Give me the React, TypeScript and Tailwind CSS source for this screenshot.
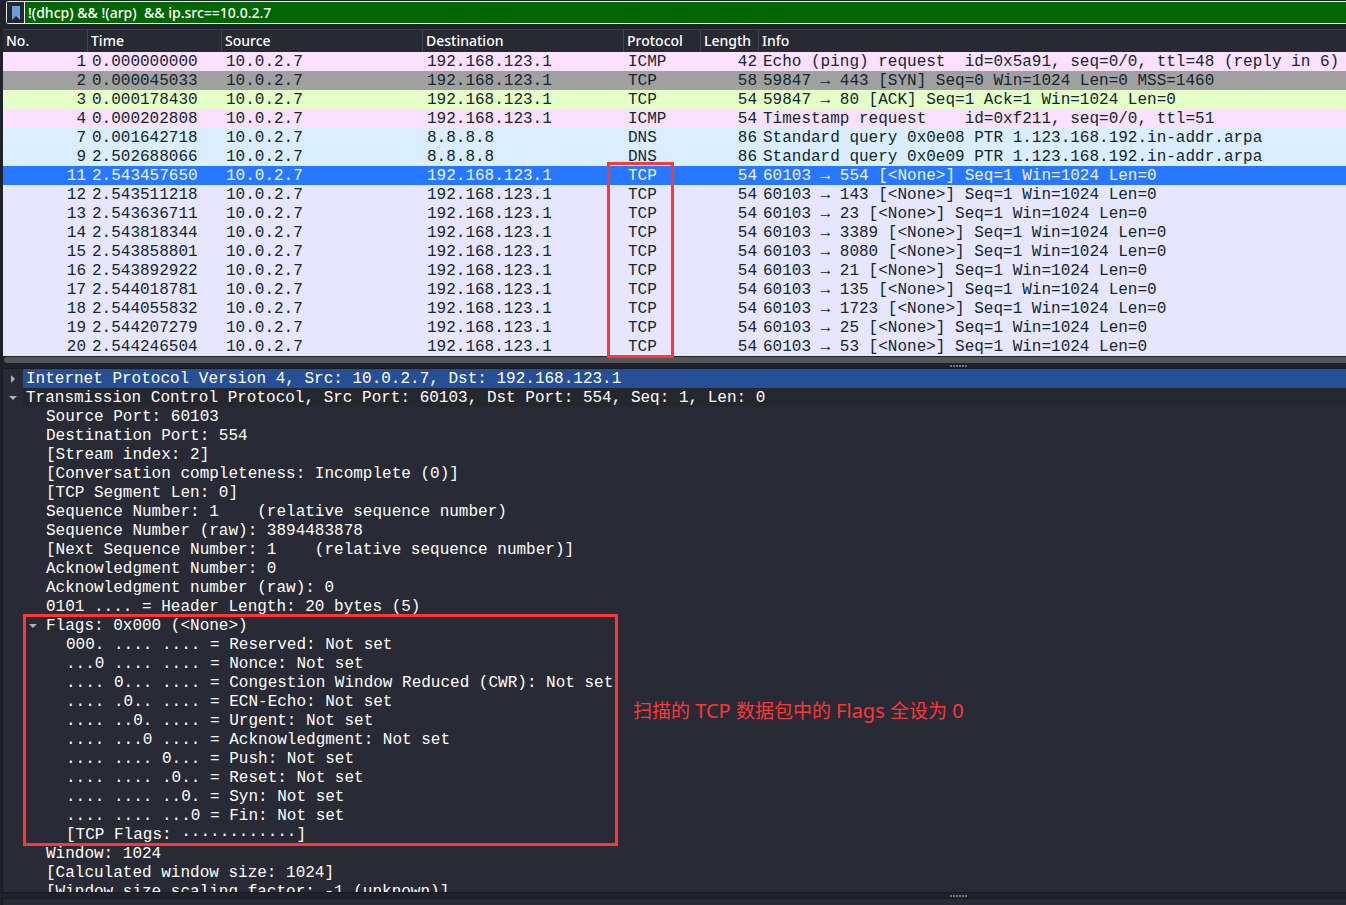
import { useState } from "react";
import clsx from "clsx";

type Tone = "icmp" | "syn" | "ack" | "dns" | "selected" | "tcp";

interface Packet {
  no: number;
  time: string;
  destination: string;
  protocol: string;
  length: number;
  info: string;
  tone: Tone;
}

interface Field {
  text: string;
  tone?: "selected" | "root";
  open?: boolean;
  children?: Field[];
}

const SOURCE = "10.0.2.7";
const HOST = "192.168.123.1";

const toneClass: Record<Tone, string> = {
  icmp: "bg-[#fce0ff] text-[#12272e]",
  syn: "bg-[#a0a0a0] text-[#12272e]",
  ack: "bg-[#e4ffc7] text-[#12272e]",
  dns: "bg-[#daeeff] text-[#12272e]",
  selected: "bg-[#2777ff] text-[#eef3ff]",
  tcp: "bg-[#e7e6ff] text-[#12272e]",
};

const columns = [
  { name: "No.", width: "w-[85px]" },
  { name: "Time", width: "w-[134px]" },
  { name: "Source", width: "w-[201px]" },
  { name: "Destination", width: "w-[201px]" },
  { name: "Protocol", width: "w-[77px]" },
  { name: "Length", width: "w-[58px]" },
  { name: "Info", width: "" },
];

const packets: Packet[] = [
  { no: 1, time: "0.000000000", destination: HOST, protocol: "ICMP", length: 42, info: "Echo (ping) request  id=0x5a91, seq=0/0, ttl=48 (reply in 6)", tone: "icmp" },
  { no: 2, time: "0.000045033", destination: HOST, protocol: "TCP", length: 58, info: "59847 → 443 [SYN] Seq=0 Win=1024 Len=0 MSS=1460", tone: "syn" },
  { no: 3, time: "0.000178430", destination: HOST, protocol: "TCP", length: 54, info: "59847 → 80 [ACK] Seq=1 Ack=1 Win=1024 Len=0", tone: "ack" },
  { no: 4, time: "0.000202808", destination: HOST, protocol: "ICMP", length: 54, info: "Timestamp request    id=0xf211, seq=0/0, ttl=51", tone: "icmp" },
  { no: 7, time: "0.001642718", destination: "8.8.8.8", protocol: "DNS", length: 86, info: "Standard query 0x0e08 PTR 1.123.168.192.in-addr.arpa", tone: "dns" },
  { no: 9, time: "2.502688066", destination: "8.8.8.8", protocol: "DNS", length: 86, info: "Standard query 0x0e09 PTR 1.123.168.192.in-addr.arpa", tone: "dns" },
  nullScan(11, "2.543457650", 554, "selected"),
  nullScan(12, "2.543511218", 143),
  nullScan(13, "2.543636711", 23),
  nullScan(14, "2.543818344", 3389),
  nullScan(15, "2.543858801", 8080),
  nullScan(16, "2.543892922", 21),
  nullScan(17, "2.544018781", 135),
  nullScan(18, "2.544055832", 1723),
  nullScan(19, "2.544207279", 25),
  nullScan(20, "2.544246504", 53),
];

const flagFields: Field[] = [
  { text: "000. .... .... = Reserved: Not set" },
  { text: "...0 .... .... = Nonce: Not set" },
  { text: ".... 0... .... = Congestion Window Reduced (CWR): Not set" },
  { text: ".... .0.. .... = ECN-Echo: Not set" },
  { text: ".... ..0. .... = Urgent: Not set" },
  { text: ".... ...0 .... = Acknowledgment: Not set" },
  { text: ".... .... 0... = Push: Not set" },
  { text: ".... .... .0.. = Reset: Not set" },
  { text: ".... .... ..0. = Syn: Not set" },
  { text: ".... .... ...0 = Fin: Not set" },
  { text: "[TCP Flags: ············]" },
];

const tcpFields: Field[] = [
  { text: "Source Port: 60103" },
  { text: "Destination Port: 554" },
  { text: "[Stream index: 2]" },
  { text: "[Conversation completeness: Incomplete (0)]" },
  { text: "[TCP Segment Len: 0]" },
  { text: "Sequence Number: 1    (relative sequence number)" },
  { text: "Sequence Number (raw): 3894483878" },
  { text: "[Next Sequence Number: 1    (relative sequence number)]" },
  { text: "Acknowledgment Number: 0" },
  { text: "Acknowledgment number (raw): 0" },
  { text: "0101 .... = Header Length: 20 bytes (5)" },
  { text: "Flags: 0x000 (<None>)", open: true, children: flagFields },
  { text: "Window: 1024" },
  { text: "[Calculated window size: 1024]" },
  { text: "[Window size scaling factor: -1 (unknown)]" },
];

const tree: Field[] = [
  { text: "Internet Protocol Version 4, Src: 10.0.2.7, Dst: 192.168.123.1", tone: "selected", children: [] },
  { text: "Transmission Control Protocol, Src Port: 60103, Dst Port: 554, Seq: 1, Len: 0", tone: "root", open: true, children: tcpFields },
];

export default function App() {
  return (
    <div className="flex h-screen flex-col overflow-hidden bg-[#20222b] font-['Noto_Sans','Noto_Sans_CJK_SC',sans-serif] text-white">
      <FilterBar />
      <PacketList />
      <Splitter />
      <section className="ml-[2px] min-h-0 flex-1 overflow-x-hidden overflow-y-auto border-y border-l border-[#191b21] bg-[#282a35] font-['Liberation_Mono',monospace] text-base/[17px] [scrollbar-width:none]">
        <ul>
          {tree.map((field) => (
            <TreeNode key={field.text} field={field} />
          ))}
        </ul>
      </section>
      <Splitter />
      <section className="ml-[2px] h-[7px] shrink-0 border-t border-l border-[#191b21] bg-[#282a35]" />
    </div>
  );
}

function FilterBar() {
  const [filter, setFilter] = useState("!(dhcp) && !(arp)  && ip.src==10.0.2.7");

  return (
    <div className="mt-px ml-1.5 flex h-[23px] shrink-0 rounded-l-[3px] border-y border-l border-[#e9ecef]">
      <button type="button" aria-label="Filter bookmarks" className="flex w-[18px] shrink-0 items-center justify-center border-r border-[#e9ecef] bg-[#242630]">
        <svg width="8" height="14" viewBox="0 0 8 14">
          <path d="M0 0h8v14L4 10 0 14z" fill="#6f9fd8" />
        </svg>
      </button>
      <input
        type="text"
        aria-label="Display filter"
        spellCheck={false}
        value={filter}
        onChange={(e) => setFilter(e.target.value)}
        className="min-w-0 flex-1 bg-[#006600] pl-[3px] text-sm/[20px] font-medium outline-none"
      />
    </div>
  );
}

function PacketList() {
  return (
    <section className="relative mt-[5px] ml-[3px] shrink-0">
      <table className="w-full table-fixed border-collapse text-left">
        <thead>
          <tr className="h-[23px] bg-[#272a33] shadow-[inset_0_1px_0_#3b3e48]">
            {columns.map((col) => (
              <th key={col.name} scope="col" className={clsx("group p-0 font-medium", col.width)}>
                <div className="h-[23px] border-r border-[#40434d] pl-[3px] text-sm/[23px] group-last:border-r-0">{col.name}</div>
              </th>
            ))}
          </tr>
        </thead>
        <tbody className="font-['Liberation_Mono',monospace] text-base/[17px] whitespace-pre">
          {packets.map((p) => (
            <tr key={p.no} className={clsx("h-[19px]", toneClass[p.tone])}>
              <td className="p-0 pt-0.5 pr-0.5 text-right">{p.no}</td>
              <td className="p-0 pt-0.5 pl-1">{p.time}</td>
              <td className="p-0 pt-0.5 pl-1">{SOURCE}</td>
              <td className="p-0 pt-0.5 pl-1">{p.destination}</td>
              <td className="p-0 pt-0.5 pl-1">{p.protocol}</td>
              <td className="p-0 pt-0.5 pr-0.5 text-right">{p.length}</td>
              <td className="overflow-hidden p-0 pt-0.5 pl-1">{p.info}</td>
            </tr>
          ))}
        </tbody>
      </table>

      {/* horizontal scrollbar */}
      <div className="h-[7px] border-t border-[#20222b]">
        <div className="ml-px h-1.5 rounded-l-full bg-[#555657]" />
      </div>

      {/* marks the protocol column of the scan */}
      <div className="pointer-events-none absolute top-[133px] bottom-[5px] left-[604px] w-[67px] border-3 border-[#ff3636]" />
    </section>
  );
}

function Splitter() {
  return (
    <div className="flex h-[5px] shrink-0 items-center justify-center gap-px pl-[570px]">
      {[0, 1, 2, 3, 4, 5].map((dot) => (
        <span key={dot} className="size-0.5 bg-[#74767d]" />
      ))}
    </div>
  );
}

function TreeNode({ field }: { field: Field }) {
  const [open, setOpen] = useState(Boolean(field.open));
  const isFlags = field.children === flagFields;

  return (
    <li className={clsx(isFlags && "relative")}>
      <div className="flex h-[19px]">
        <div className="flex w-5 shrink-0 items-center justify-center">
          {field.children && (
            <button type="button" aria-expanded={open} aria-label="Toggle field" onClick={() => setOpen(!open)}>
              <svg className="block" width="8" height="8" viewBox="0 0 8 8" fill="#b0b1b5">
                <path d={open ? "M0 2h8L4 6z" : "M2 0v8l4-4z"} />
              </svg>
            </button>
          )}
        </div>
        <div
          className={clsx(
            "flex-1 pt-0.5 pl-[3px] whitespace-pre",
            field.tone === "selected" && "bg-[#264f96]",
            field.tone === "root" && "bg-[#24272e]"
          )}
        >
          {field.text}
        </div>
      </div>

      {open && field.children && (
        <ul className="pl-5">
          {field.children.map((child) => (
            <TreeNode key={child.text} field={child} />
          ))}
        </ul>
      )}

      {isFlags && (
        <>
          <div className="pointer-events-none absolute -inset-y-0.5 left-0 w-[595px] border-3 border-[#ff3636]" />
          <p className="absolute top-[82px] left-[610px] font-['Noto_Sans','Noto_Sans_CJK_SC',sans-serif] text-[19px]/[26px] whitespace-nowrap text-[#ff3636]">
            扫描的<span className="text-xl/[26px]"> TCP </span>数据包中的<span className="text-xl/[26px]"> Flags </span>全设为
            <span className="text-xl/[26px]"> 0</span>
          </p>
        </>
      )}
    </li>
  );
}

function nullScan(no: number, time: string, port: number, tone: Tone = "tcp"): Packet {
  return {
    no,
    time,
    destination: HOST,
    protocol: "TCP",
    length: 54,
    info: `60103 → ${port} [<None>] Seq=1 Win=1024 Len=0`,
    tone,
  };
}
